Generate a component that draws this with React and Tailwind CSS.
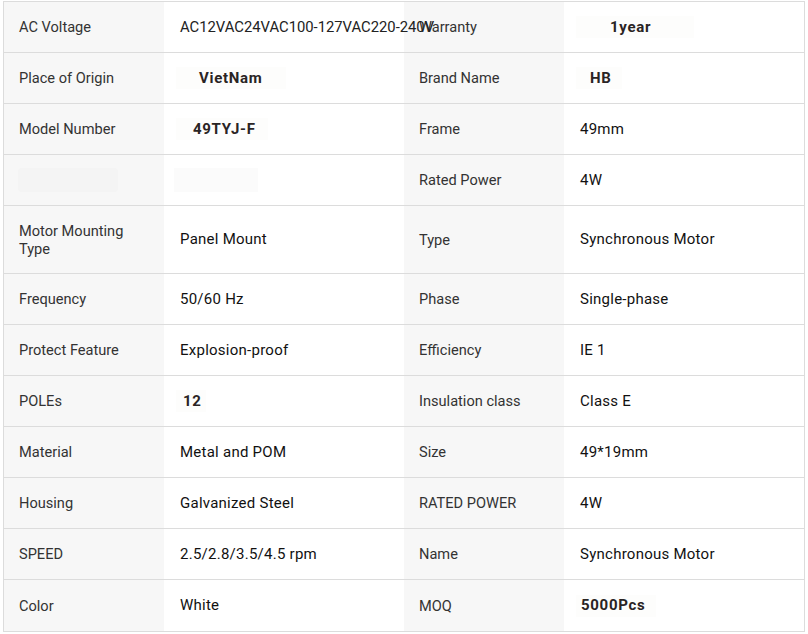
import React from 'react';

// spec rows: [label, value, label, value]
const rows = [
  { cells: ['AC Voltage', { text: 'AC12VAC24VAC100-127VAC220-240V', kind: 'overflow' }, 'Warranty', { text: '1year', kind: 'chip', pad: 'pl-[34px]', box: 'w-[118px]' }] },
  { cells: ['Place of Origin', { text: 'VietNam', kind: 'chip', pad: 'pl-[23px]', box: 'w-[110px]' }, 'Brand Name', { text: 'HB', kind: 'chip', pad: 'pl-[14px]', box: 'w-[46px]' }] },
  { cells: ['Model Number', { text: '49TYJ-F', kind: 'chip', pad: 'pl-[17px]', box: 'w-[92px]' }, 'Frame', '49mm'] },
  { cells: [{ kind: 'blur' }, { kind: 'blurValue' }, 'Rated Power', '4W'] },
  { tall: true, cells: ['Motor Mounting Type', 'Panel Mount', 'Type', 'Synchronous Motor'] },
  { cells: ['Frequency', '50/60 Hz', 'Phase', 'Single-phase'] },
  { cells: ['Protect Feature', 'Explosion-proof', 'Efficiency', 'IE 1'] },
  { cells: ['POLEs', { text: '12', kind: 'chip', pad: 'pl-[7px]', box: 'w-[30px]' }, 'Insulation class', 'Class E'] },
  { cells: ['Material', 'Metal and POM', 'Size', '49*19mm'] },
  { cells: ['Housing', 'Galvanized Steel', 'RATED POWER', '4W'] },
  { cells: ['SPEED', '2.5/2.8/3.5/4.5 rpm', 'Name', 'Synchronous Motor'] },
  { cells: ['Color', 'White', 'MOQ', { text: '5000Pcs', kind: 'chip', pad: 'pl-[5px]', box: 'w-[80px]' }] },
];

const Label = ({ cell, wide }) => {
  if (cell && cell.kind === 'blur') {
    return (
      <div className={`${wide} bg-[#f7f7f7] flex items-center pl-[14px] pr-3`}>
        <div className="w-[100px] h-[24px] bg-[#f4f4f4] rounded-sm" />
      </div>
    );
  }
  return (
    <div className={`${wide} bg-[#f7f7f7] flex items-center pl-[15px] pr-4 text-[14.6px] leading-[18px] text-[#333]`}>
      {cell}
    </div>
  );
};

const Value = ({ cell, wide }) => {
  if (typeof cell === 'string') {
    return (
      <div className={`${wide} bg-white flex items-center pl-[16px] pr-4 text-[15px] tracking-[0.25px] text-[#111]`}>
        {cell}
      </div>
    );
  }
  if (cell.kind === 'blurValue') {
    return (
      <div className={`${wide} bg-white flex items-center pl-[10px]`}>
        <div className="w-[84px] h-[24px] bg-[#fbfbfb]" />
      </div>
    );
  }
  if (cell.kind === 'overflow') {
    return (
      <div className={`${wide} bg-white flex items-center pl-[16px] relative z-10`}>
        <span className="whitespace-nowrap text-[14.8px] text-[#222]">{cell.text}</span>
      </div>
    );
  }
  return (
    <div className={`${wide} bg-white flex items-center pl-[12px]`}>
      <div className={`${cell.box} h-[22px] bg-[#fdfdfc] flex items-center ${cell.pad}`}>
        <span className="text-[15px] font-bold text-[#2a2424] tracking-[0.7px]">{cell.text}</span>
      </div>
    </div>
  );
};

export default function App() {
  return (
    <div className="w-[808px] h-[634px] bg-white pt-[1px] pl-[3px]" style={{ fontFamily: 'Roboto, "Liberation Sans", Arial, sans-serif' }}>
      <div className="w-[802px] border border-[#dcdcdc]">
        {rows.map((row, i) => (
          <div
            key={i}
            className={`flex ${row.tall ? 'h-[68px]' : 'h-[51px]'} ${i < rows.length - 1 ? 'border-b border-[#dcdcdc]' : ''}`}
          >
            <Label cell={row.cells[0]} wide="w-[160px]" />
            <Value cell={row.cells[1]} wide="w-[240px]" />
            <Label cell={row.cells[2]} wide="w-[160px]" />
            <Value cell={row.cells[3]} wide="w-[240px]" />
          </div>
        ))}
      </div>
    </div>
  );
}
